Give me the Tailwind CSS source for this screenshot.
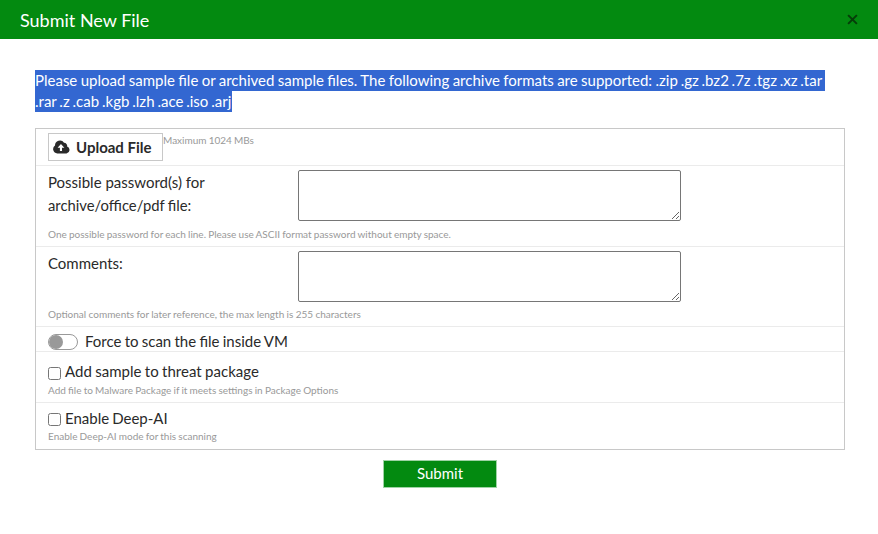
<!DOCTYPE html>
<html lang="en">
<head>
  <meta charset="UTF-8">
  <title>Submit New File</title>
  <script src="https://cdn.jsdelivr.net/npm/@tailwindcss/browser@4"></script>
</head>
<body class="bg-white text-[#2a2a2a] font-['Lato',sans-serif] text-[15px] h-[534px] overflow-hidden">

  <header class="h-[39px] bg-[#038a10] flex items-center justify-between pl-[20px] pr-[20px]">
    <h1 class="text-white text-[18px] leading-[24px] pt-px whitespace-nowrap">Submit New File</h1>
    <button aria-label="Close" class="text-[#063d09]">
      <svg class="w-[11px] h-[11px] block" viewBox="0 0 10 10" fill="none" stroke="currentColor" stroke-width="1.8"><path d="M1 1l8 8M9 1l-8 8"/></svg>
    </button>
  </header>

  <main class="px-[35px] pt-[31px] pr-[33px]">
    <p class="text-white leading-[21px] whitespace-nowrap mb-[16px]">
      <span class="block w-[790px] bg-[#3367d1] [word-spacing:-0.45px]">Please upload sample file or archived sample files. The following archive formats are supported: <span class="[word-spacing:-1.05px]">.zip .gz .bz2 .7z .tgz .xz .tar</span></span>
      <span class="block w-[197px] bg-[#3367d1] [word-spacing:-0.95px]">.rar .z .cab .kgb .lzh .ace .iso .arj</span>
    </p>

    <form class="w-[810px] h-[322px] border border-[#c8c8c8] whitespace-nowrap">
      <div class="h-[37px] border-b border-[#ebebeb] pl-[12px] pt-[4px] flex items-start">
        <button type="button" class="w-[115px] h-[28px] border border-[#c8c8c8] pl-[4px] flex items-center font-bold">
          <svg class="w-[17px] h-[14px] mr-[6px]" viewBox="0 0 16 13" preserveAspectRatio="none"><path fill="#2a2a2a" d="M4 12.5A4 4 0 0 1 1.9 5.2A4.6 4.6 0 0 1 10.4 2.6A2.9 2.9 0 0 1 13.3 6.1A3.3 3.3 0 0 1 12.7 12.5Z"/><path fill="#fff" d="M7.5 3.8L10.7 7.3H8.5V10.3H6.5V7.3H4.3Z"/></svg>
          <span>Upload File</span>
        </button>
        <small class="text-[10px] leading-[14px] text-[#999] [word-spacing:-0.4px]">Maximum 1024 MBs</small>
      </div>

      <div class="h-[81px] border-b border-[#ebebeb] pl-[12px] pt-[4px]">
        <div class="flex items-start h-[57px]">
          <label class="w-[250px] leading-[23px] pt-[1px]">Possible password(s) for<br><span class="text-[14.8px] [word-spacing:-0.5px]">archive/office/pdf file:</span></label>
          <textarea class="w-[383px] h-[51px] border border-[#767676] rounded-[2px] resize"></textarea>
        </div>
        <small class="block text-[10px] leading-[14px] text-[#999] [word-spacing:-0.38px]">One possible password for each line. Please use ASCII format password without empty space.</small>
      </div>

      <div class="h-[80px] border-b border-[#ebebeb] pl-[12px] pt-[4px]">
        <div class="flex items-start h-[56px]">
          <label class="w-[250px] leading-[23px] pt-[1px]">Comments:</label>
          <textarea class="w-[383px] h-[51px] border border-[#767676] rounded-[2px] resize"></textarea>
        </div>
        <small class="block text-[10px] leading-[14px] text-[#999] [word-spacing:-0.2px]">Optional comments for later reference, the max length is 255 characters</small>
      </div>

      <div class="h-[25px] border-b border-[#ebebeb] pl-[12px] pt-[5px] flex items-center">
        <span class="w-[30px] h-[16px] border border-[#999] rounded-full mr-[7px] flex items-center">
          <span class="w-[14px] h-[14px] rounded-full bg-[#999]"></span>
        </span>
        <label class="[word-spacing:-0.6px]">Force to scan the file inside VM</label>
      </div>

      <div class="h-[51px] border-b border-[#ebebeb] pl-[12px] pt-[9px]">
        <label class="flex h-[22px] leading-[20px] [word-spacing:-0.4px]"><input type="checkbox" class="w-[13px] h-[13px] mt-[6px] mr-[4px]">Add sample to threat package</label>
        <small class="block text-[10px] leading-[14px] text-[#999] [word-spacing:-0.35px]">Add file to Malware Package if it meets settings in Package Options</small>
      </div>

      <div class="pl-[12px] pt-[4px]">
        <label class="flex h-[22px] leading-[23px] [word-spacing:-0.8px]"><input type="checkbox" class="w-[13px] h-[13px] mt-[6px] mr-[4px]">Enable Deep-AI</label>
        <small class="block text-[10px] leading-[14px] text-[#999] [word-spacing:-0.4px]">Enable Deep-AI mode for this scanning</small>
      </div>
    </form>

    <div class="w-[810px] pt-[10px] flex justify-center">
      <button type="submit" class="w-[114px] h-[28px] bg-[#038a10] border border-[#9fd3a5] text-white pb-[2px]">Submit</button>
    </div>
  </main>

</body>
</html>
